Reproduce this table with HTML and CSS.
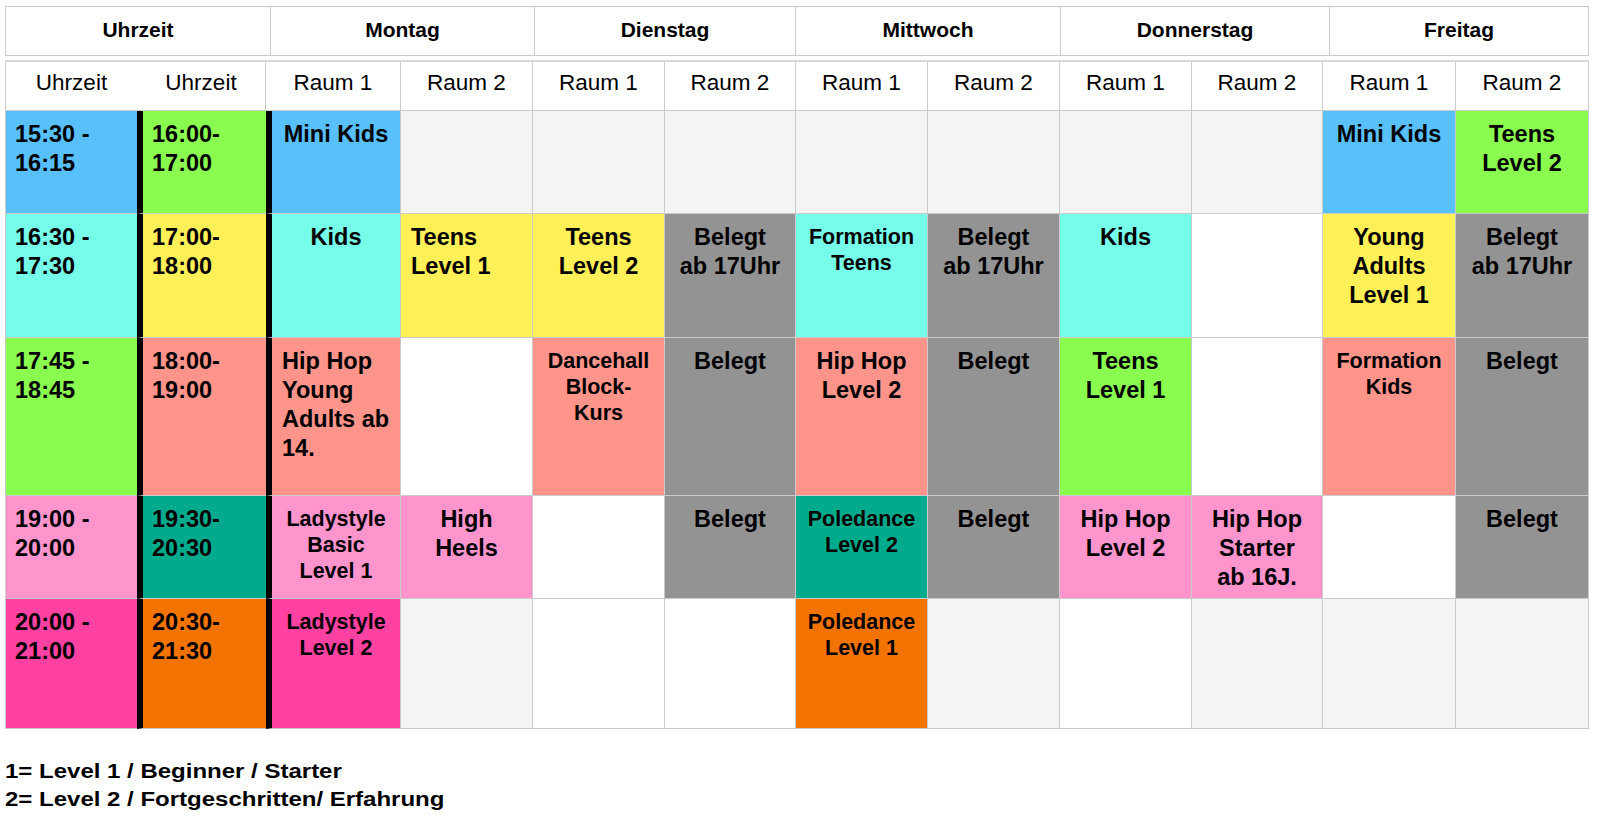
FILE: index.html
```html
<!DOCTYPE html>
<html lang="de">
<head>
<meta charset="utf-8">
<title>Stundenplan</title>
<link rel="stylesheet" href="styles.css">
</head>
<body>
<div class="page">
  <div class="days">
    <div class="day w1">Uhrzeit</div>
    <div class="day w2">Montag</div>
    <div class="day w3">Dienstag</div>
    <div class="day w4">Mittwoch</div>
    <div class="day w5">Donnerstag</div>
    <div class="day w6">Freitag</div>
  </div>

  <div class="plan">
    <div class="hcell open">Uhrzeit</div>
    <div class="hcell">Uhrzeit</div>
    <div class="hcell">Raum 1</div>
    <div class="hcell">Raum 2</div>
    <div class="hcell">Raum 1</div>
    <div class="hcell">Raum 2</div>
    <div class="hcell">Raum 1</div>
    <div class="hcell">Raum 2</div>
    <div class="hcell">Raum 1</div>
    <div class="hcell">Raum 2</div>
    <div class="hcell">Raum 1</div>
    <div class="hcell">Raum 2</div>

    <!-- Zeile 1 -->
    <div class="cell time t1 blue">15:30 -<br>16:15</div>
    <div class="cell time t2 green">16:00-<br>17:00</div>
    <div class="cell c3 blue">Mini Kids</div>
    <div class="cell light"></div>
    <div class="cell light"></div>
    <div class="cell light"></div>
    <div class="cell light"></div>
    <div class="cell light"></div>
    <div class="cell light"></div>
    <div class="cell light"></div>
    <div class="cell blue">Mini Kids</div>
    <div class="cell green">Teens<br>Level 2</div>

    <!-- Zeile 2 -->
    <div class="cell time t1 cyan">16:30 -<br>17:30</div>
    <div class="cell time t2 yellow">17:00-<br>18:00</div>
    <div class="cell c3 cyan">Kids</div>
    <div class="cell left yellow">Teens<br>Level 1</div>
    <div class="cell yellow">Teens<br>Level 2</div>
    <div class="cell gray">Belegt<br>ab 17Uhr</div>
    <div class="cell small cyan">Formation<br>Teens</div>
    <div class="cell gray">Belegt<br>ab 17Uhr</div>
    <div class="cell cyan">Kids</div>
    <div class="cell"></div>
    <div class="cell yellow">Young<br>Adults<br>Level 1</div>
    <div class="cell gray">Belegt<br>ab 17Uhr</div>

    <!-- Zeile 3 -->
    <div class="cell time t1 green">17:45 -<br>18:45</div>
    <div class="cell time t2 salmon">18:00-<br>19:00</div>
    <div class="cell c3 left salmon">Hip Hop<br>Young<br>Adults ab<br>14.</div>
    <div class="cell"></div>
    <div class="cell small salmon">Dancehall<br>Block-<br>Kurs</div>
    <div class="cell gray">Belegt</div>
    <div class="cell salmon">Hip Hop<br>Level 2</div>
    <div class="cell gray">Belegt</div>
    <div class="cell green">Teens<br>Level 1</div>
    <div class="cell"></div>
    <div class="cell small salmon">Formation<br>Kids</div>
    <div class="cell gray">Belegt</div>

    <!-- Zeile 4 -->
    <div class="cell time t1 pink">19:00 -<br>20:00</div>
    <div class="cell time t2 teal">19:30-<br>20:30</div>
    <div class="cell c3 small pink">Ladystyle<br>Basic<br>Level 1</div>
    <div class="cell pink">High<br>Heels</div>
    <div class="cell"></div>
    <div class="cell gray">Belegt</div>
    <div class="cell small teal">Poledance<br>Level 2</div>
    <div class="cell gray">Belegt</div>
    <div class="cell pink">Hip Hop<br>Level 2</div>
    <div class="cell pink">Hip Hop<br>Starter<br>ab 16J.</div>
    <div class="cell"></div>
    <div class="cell gray">Belegt</div>

    <!-- Zeile 5 -->
    <div class="cell time t1 hotpink">20:00 -<br>21:00</div>
    <div class="cell time t2 orange">20:30-<br>21:30</div>
    <div class="cell c3 small hotpink">Ladystyle<br>Level 2</div>
    <div class="cell light"></div>
    <div class="cell"></div>
    <div class="cell"></div>
    <div class="cell small orange">Poledance<br>Level 1</div>
    <div class="cell light"></div>
    <div class="cell"></div>
    <div class="cell light"></div>
    <div class="cell light"></div>
    <div class="cell light"></div>
  </div>

  <div class="legend">
    <p>1= Level 1 / Beginner / Starter</p>
    <p>2= Level 2 / Fortgeschritten/ Erfahrung</p>
  </div>
</div>
</body>
</html>
```
FILE: styles.css
```css
html, body {
  margin: 0;
  padding: 0;
  background: #ffffff;
}

body {
  font-family: "Liberation Sans", Arial, sans-serif;
  color: #000;
}

.page {
  padding: 6px 0 0 5px;
}

/* Kopfzeile mit Wochentagen */
.days {
  display: flex;
  width: 1583px;
  border-left: 1px solid #cbcbcb;
  border-top: 1px solid #cbcbcb;
  border-bottom: 1px solid #cbcbcb;
}

.day {
  box-sizing: border-box;
  height: 48px;
  line-height: 46px;
  border-right: 1px solid #cbcbcb;
  text-align: center;
  font-weight: bold;
  font-size: 21px;
}

.w1 { width: 265px; }
.w2 { width: 264px; }
.w3 { width: 261px; }
.w4 { width: 265px; }
.w5 { width: 269px; }
.w6 { width: 259px; }

/* Stundenplan-Raster */
.plan {
  margin-top: 4px;
  display: grid;
  width: 1583px;
  grid-template-columns: 131px 129px 135px 132px 132px 131px 132px 132px 132px 131px 133px 133px;
  grid-template-rows: 49px 103px 124px 158px 103px 130px;
  border-left: 1px solid #cbcbcb;
  border-top: 2px solid #d9d9d9;
}

.hcell {
  box-sizing: border-box;
  border-right: 1px solid #cbcbcb;
  border-bottom: 1px solid #cbcbcb;
  text-align: center;
  font-size: 22.5px;
  line-height: 42px;
  white-space: nowrap;
}

.hcell.open {
  border-right: none;
}

.cell {
  box-sizing: border-box;
  border-right: 1px solid #cbcbcb;
  border-bottom: 1px solid #cbcbcb;
  padding: 9px 10px 0;
  text-align: center;
  font-weight: bold;
  font-size: 23.5px;
  line-height: 29px;
  white-space: nowrap;
  overflow: hidden;
}

.cell.small {
  font-size: 21.5px;
  line-height: 26px;
  padding-top: 10px;
}

.cell.left {
  text-align: left;
}

.cell.time {
  text-align: left;
  padding-left: 9px;
}

.cell.t1 {
  border-right: none;
}

.cell.t2 {
  border-left: 6px solid #000;
  border-right: none;
}

.cell.c3 {
  border-left: 6px solid #000;
}

/* Farben */
.blue    { background: #57c0fd; }
.green   { background: #8afb4f; }
.cyan    { background: #76fde9; }
.yellow  { background: #fff057; }
.salmon  { background: #ff958a; }
.pink    { background: #ff95cc; }
.teal    { background: #00aa8d; }
.hotpink { background: #ff42a1; }
.orange  { background: #f27300; }
.gray    { background: #939393; }
.light   { background: #f4f4f4; }

/* Legende */
.legend {
  width: max-content;
  margin-top: 28px;
  font-weight: bold;
  font-size: 20px;
  line-height: 28px;
  transform: scaleX(1.2);
  transform-origin: left top;
}

.legend p {
  margin: 0;
  white-space: nowrap;
}
```
